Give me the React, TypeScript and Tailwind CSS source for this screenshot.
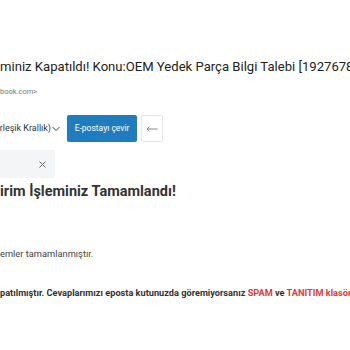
import React from "react";

export default function App() {
  return (
    <div className="w-[350px] h-[350px] overflow-hidden bg-white" style={{ fontFamily: "Roboto, 'Noto Sans', sans-serif" }}>
      <div className="pt-[59px]">
        <div className="whitespace-nowrap text-[13.1px] leading-[16px] text-[#222]">
          miniz Kapatıldı! Konu:OEM Yedek Parça Bilgi Talebi [19276782]
        </div>
        <div className="mt-[12px] whitespace-nowrap text-[7.5px] leading-[10px] text-[#777]">book.com&gt;</div>
        <div className="mt-[18px] flex items-center h-[27px]">
          <div className="flex items-center h-[27px] w-[63px] justify-end pr-[3px] text-[9px] text-[#333] whitespace-nowrap overflow-hidden">
            <span>rleşik Krallık)</span>
            <svg width="8" height="6" viewBox="0 0 8 6" className="ml-[1px] shrink-0">
              <path d="M0.5 1 L4 4.5 L7.5 1" fill="none" stroke="#444" strokeWidth="1" />
            </svg>
          </div>
          <div className="ml-[4px] h-[27px] w-[70px] rounded-[2px] bg-[#1f7dbf] flex items-center justify-center text-white text-[8.5px] whitespace-nowrap">
            E-postayı çevir
          </div>
          <div className="ml-[4px] h-[27px] w-[22px] border border-[#e6e6e6] rounded-[2px] flex items-center justify-center">
            <svg width="12" height="6" viewBox="0 0 12 6">
              <path d="M11.5 3 H1 M3.5 0.5 L1 3 L3.5 5.5" fill="none" stroke="#888" strokeWidth="1" />
            </svg>
          </div>
        </div>
        <div className="mt-[8px] h-[28px] w-[55px] bg-[#f4f5f7] flex items-center justify-end pr-[9px]">
          <svg width="7" height="7" viewBox="0 0 7 7">
            <path d="M0.5 0.5 L6.5 6.5 M6.5 0.5 L0.5 6.5" stroke="#666" strokeWidth="1" />
          </svg>
        </div>
        <div className="mt-[5px] whitespace-nowrap text-[14.5px] leading-[18px] font-bold text-[#333]">
          irim İşleminiz Tamamlandı!
        </div>
        <div className="mt-[47px] whitespace-nowrap text-[9.3px] leading-[12px] text-[#444]">
          emler tamamlanmıştır.
        </div>
        <div className="mt-[27px] whitespace-nowrap text-[9.2px] leading-[12px] font-bold text-[#333]">
          patılmıştır. Cevaplarımızı eposta kutunuzda göremiyorsanız <span className="text-[#e53935]">SPAM</span> ve <span className="text-[#e53935]">TANITIM klasörünü</span> kontrol ediniz.
        </div>
      </div>
    </div>
  );
}
